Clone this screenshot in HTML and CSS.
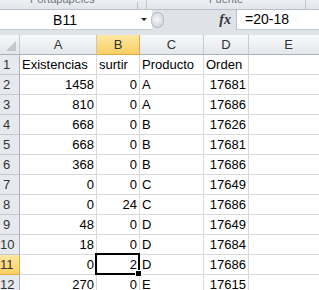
FILE: index.html
```html
<!DOCTYPE html>
<html lang="es">
<head>
    <meta charset="UTF-8">
    <meta name="viewport" content="width=device-width, initial-scale=1.0">
    <title>Hoja de cálculo</title>
    <link rel="stylesheet" href="styles.css">
</head>
<body>
    <!-- bottom edge of the ribbon, labels are clipped -->
    <div class="ribbon">
        <div class="group group-clip">
            <span class="group-label">Portapapeles</span>
            <span class="launcher"></span>
        </div>
        <div class="group group-font">
            <span class="group-label">Fuente</span>
        </div>
    </div>

    <div class="formula-bar">
        <div class="name-box">
            <span class="name">B11</span>
            <span class="arrow"></span>
        </div>
        <div class="grip"></div>
        <div class="fx">fx</div>
        <div class="formula">=20-18</div>
    </div>

    <div class="sheet">
        <div class="corner"><span class="corner-tri"></span></div>
        <div class="col-head">A</div>
        <div class="col-head selected">B</div>
        <div class="col-head">C</div>
        <div class="col-head">D</div>
        <div class="col-head">E</div>

        <div class="row-head">1</div>
        <div class="cell">Existencias</div>
        <div class="cell">surtir</div>
        <div class="cell">Producto</div>
        <div class="cell">Orden</div>
        <div class="cell"></div>

        <div class="row-head">2</div>
        <div class="cell num">1458</div>
        <div class="cell num">0</div>
        <div class="cell">A</div>
        <div class="cell num">17681</div>
        <div class="cell"></div>

        <div class="row-head">3</div>
        <div class="cell num">810</div>
        <div class="cell num">0</div>
        <div class="cell">A</div>
        <div class="cell num">17686</div>
        <div class="cell"></div>

        <div class="row-head">4</div>
        <div class="cell num">668</div>
        <div class="cell num">0</div>
        <div class="cell">B</div>
        <div class="cell num">17626</div>
        <div class="cell"></div>

        <div class="row-head">5</div>
        <div class="cell num">668</div>
        <div class="cell num">0</div>
        <div class="cell">B</div>
        <div class="cell num">17681</div>
        <div class="cell"></div>

        <div class="row-head">6</div>
        <div class="cell num">368</div>
        <div class="cell num">0</div>
        <div class="cell">B</div>
        <div class="cell num">17686</div>
        <div class="cell"></div>

        <div class="row-head">7</div>
        <div class="cell num">0</div>
        <div class="cell num">0</div>
        <div class="cell">C</div>
        <div class="cell num">17649</div>
        <div class="cell"></div>

        <div class="row-head">8</div>
        <div class="cell num">0</div>
        <div class="cell num">24</div>
        <div class="cell">C</div>
        <div class="cell num">17686</div>
        <div class="cell"></div>

        <div class="row-head">9</div>
        <div class="cell num">48</div>
        <div class="cell num">0</div>
        <div class="cell">D</div>
        <div class="cell num">17649</div>
        <div class="cell"></div>

        <div class="row-head">10</div>
        <div class="cell num">18</div>
        <div class="cell num">0</div>
        <div class="cell">D</div>
        <div class="cell num">17684</div>
        <div class="cell"></div>

        <div class="row-head selected">11</div>
        <div class="cell num">0</div>
        <div class="cell num active">2<span class="fill-handle"></span></div>
        <div class="cell">D</div>
        <div class="cell num">17686</div>
        <div class="cell"></div>

        <div class="row-head">12</div>
        <div class="cell num">270</div>
        <div class="cell num">0</div>
        <div class="cell">E</div>
        <div class="cell num">17615</div>
        <div class="cell"></div>
    </div>
</body>
</html>
```

FILE: styles.css
```css
body {
    margin: 0;
    width: 319px;
    height: 290px;
    overflow: hidden;
    background-color: #dfe3e8;
    font-family: "Liberation Sans", Arial, sans-serif;
    font-size: 13px;
    color: #000;
}

/* Ribbon strip */
.ribbon {
    display: flex;
    height: 9px;
    background: linear-gradient(#eef0f3, #e1e5ea);
    border-bottom: 1px solid #b9c0c9;
    overflow: hidden;
}
.group {
    display: flex;
    align-items: flex-end;
    height: 9px;
    border-right: 1px solid #c3c8cf;
    box-sizing: border-box;
}
.group-clip {
    width: 147px;
    padding-left: 30px;
}
.group-font {
    width: 159px;
    justify-content: center;
}
.group-label {
    font-size: 11px;
    line-height: 13px;
    margin-bottom: 3px;
    color: #6d7580;
}
.launcher {
    width: 1px;
    height: 7px;
    margin-left: auto;
    margin-right: 8px;
    background-color: #b8bec6;
}

/* Formula bar */
.formula-bar {
    display: flex;
    height: 20px;
    align-items: stretch;
}
.name-box {
    width: 152px;
    display: flex;
    align-items: center;
    background-color: #fff;
    border-bottom: 1px solid #c7ccd3;
    box-sizing: border-box;
}
.name {
    width: 130px;
    text-align: center;
    font-size: 14px;
}
.arrow {
    margin-left: 11px;
    width: 0;
    height: 0;
    border-left: 3px solid transparent;
    border-right: 3px solid transparent;
    border-top: 3px solid #222;
}
.grip {
    width: 13px;
    height: 16px;
    margin: 2px 0 0 -1px;
    border-radius: 8px;
    background: radial-gradient(circle at 45% 45%, #f4f5f7, #c9ced5);
    border: 1px solid #b3b9c1;
    box-sizing: border-box;
}
.fx {
    width: 72px;
    text-align: right;
    padding-right: 5px;
    font-family: "Liberation Serif", serif;
    font-style: italic;
    font-weight: bold;
    font-size: 14px;
    line-height: 20px;
    color: #333;
    box-sizing: border-box;
}
.formula {
    flex: 1;
    background-color: #fff;
    border-left: 1px solid #b9c0c9;
    border-bottom: 1px solid #c7ccd3;
    padding-left: 8px;
    font-size: 14px;
    line-height: 19px;
}

/* Grid */
.sheet {
    display: grid;
    grid-template-columns: 20px 77px 43px 64px 45px 80px;
    grid-auto-rows: 20px;
    margin-top: 5px;
    background-color: #fff;
}
.corner,
.col-head,
.row-head,
.cell {
    box-sizing: border-box;
    line-height: 19px;
    white-space: nowrap;
    overflow: hidden;
}
.corner {
    position: relative;
    background: linear-gradient(#f6f7f9, #e3e6ea);
    border-right: 1px solid #c5cad1;
    border-bottom: 1px solid #a9b1bb;
}
.corner-tri {
    position: absolute;
    right: 3px;
    bottom: 3px;
    width: 0;
    height: 0;
    border-left: 10px solid transparent;
    border-bottom: 10px solid #c2c7ce;
}
.col-head {
    text-align: center;
    color: #333;
    background: linear-gradient(#f8f9fa, #e4e7eb);
    border-right: 1px solid #c5cad1;
    border-bottom: 1px solid #a9b1bb;
}
.row-head {
    padding-right: 6px;
    text-align: center;
    color: #333;
    background-color: #e6e9ed;
    border-right: 1px solid #a9b1bb;
    border-bottom: 1px solid #c5cad1;
}
.col-head.selected,
.row-head.selected {
    background: linear-gradient(#fde8a4, #f9cf63);
    border-color: #e2ac3c;
}
.cell {
    padding: 0 2px;
    border-right: 1px solid #d9d9d9;
    border-bottom: 1px solid #d9d9d9;
}
.cell.num {
    text-align: right;
}

/* Active cell outline */
.cell.active {
    position: relative;
    overflow: visible;
    z-index: 2;
}
.cell.active::after {
    content: "";
    position: absolute;
    top: -2px;
    left: -2px;
    right: -1px;
    bottom: -1px;
    border: 2px solid #000;
}
.fill-handle {
    position: absolute;
    right: -3px;
    bottom: -3px;
    width: 5px;
    height: 5px;
    background-color: #000;
    border: 1px solid #fff;
    z-index: 3;
}
```
